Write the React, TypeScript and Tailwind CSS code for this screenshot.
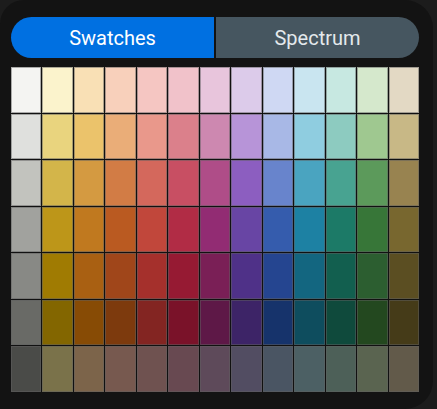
const palette: string[][] = [
  ["#f4f4f2", "#fbf3cc", "#f9e0b5", "#f8d0bb", "#f5c6c2", "#f1c2ca", "#e8c5dc", "#dccbea", "#cfd8f3", "#c9e5f0", "#c7e8e1", "#d5e8cc", "#e3d9c4"],
  ["#dfe0dd", "#e9d47e", "#ebc36b", "#eaad78", "#e9988b", "#db808b", "#cd88b0", "#b794d8", "#a8b8e6", "#8fcde0", "#8dcbc0", "#9fc890", "#c8b886"],
  ["#c2c3be", "#d3b54a", "#d49a41", "#d27c45", "#d4685c", "#c84f63", "#af4d88", "#8c5ec0", "#6884cc", "#4aa4c0", "#48a391", "#5c9a5b", "#988350"],
  ["#a1a29e", "#bd9619", "#c0791f", "#ba5a21", "#c1473b", "#b12c45", "#922c73", "#6845a4", "#355cad", "#1d81a3", "#1c7a67", "#377638", "#78672f"],
  ["#888985", "#a07b02", "#a96012", "#a0461a", "#a5302c", "#961a33", "#7a1f56", "#4f3188", "#254590", "#136680", "#125f4f", "#2c5e30", "#5b4e22"],
  ["#696a66", "#836600", "#874b05", "#7d3a0d", "#832522", "#7a1229", "#5e1847", "#3d2467", "#16336b", "#0e4d5e", "#0f4a3c", "#23481f", "#453b18"],
  ["#4a4b48", "#7a724a", "#7c644a", "#77594f", "#6f5250", "#684951", "#5e4a5a", "#524d62", "#4a5563", "#4c6064", "#4d6058", "#5a6450", "#625a4a"],
];

const App = () => {
  return (
    <div className="w-[437px] h-[409px] bg-[#1c1c1c]" style={{ fontFamily: "Roboto, 'Noto Sans', sans-serif" }}>
      <div className="w-[433px] h-[409px] rounded-br-[28px] rounded-tr-[28px] rounded-tl-[24px] bg-[#131313] pl-[11px] pt-[17px]">
        <div className="flex w-[408px] gap-[2px]">
          <button className="h-[41px] flex-1 rounded-l-full bg-[#0070e1] text-[20px] text-white">
            Swatches
          </button>
          <button className="h-[41px] flex-1 rounded-r-full bg-[#465660] text-[20px] text-[#e4e9ec]">
            Spectrum
          </button>
        </div>

        {/* 13 x 7 colour grid, each chip framed by a thin translucent border */}
        <div className="mt-[9px] grid w-[408px] grid-cols-13 gap-px bg-[#111]">
          {palette.flatMap((row, r) =>
            row.map((color, c) => (
              <div
                key={`${r}-${c}`}
                className="h-[45.5px] border border-[#60606080]"
                style={{ backgroundColor: color }}
              />
            ))
          )}
        </div>
      </div>
    </div>
  );
};

export default App;
